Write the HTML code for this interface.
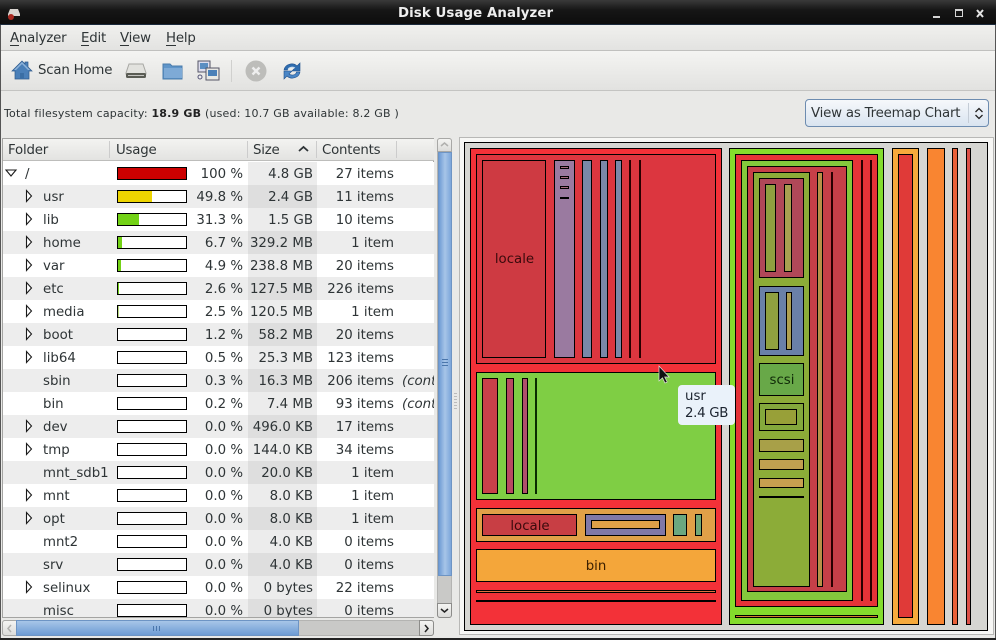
<!DOCTYPE html>
<html><head><meta charset="utf-8"><style>
html,body{margin:0;padding:0;background:#e9e9e7}
#w{position:relative;width:996px;height:640px;overflow:hidden;font:13.33px "DejaVu Sans",sans-serif;color:#2e3436;background:#e9e9e7}
#w div,#w span,#w svg{position:absolute}
.t{white-space:nowrap;line-height:16px}
.k{letter-spacing:-.2px}
.r{left:3px;width:431px;height:23px;overflow:hidden}
.r span{top:5px;white-space:nowrap;line-height:16px}
.n{left:40px}
.p{right:191px}
.s{left:245px;width:69px;top:0!important;height:23px;text-align:right;line-height:25px!important;box-sizing:border-box;padding-right:4px}
.c{right:40px}
.x{left:399px;font-style:italic}
.b{left:114px;top:5px!important;width:68px;height:11px;border:1px solid #000;background:#fff;overflow:hidden}
.b i{display:block;height:100%}
.o{background:#fff}.e{background:#ededed}
.o .s{background:#ececec}.e .s{background:#dedede}
.h{top:141px;height:21px;line-height:20px}
</style></head><body><div id="w">

<div style="left:0;top:0;width:996px;height:25px;background:linear-gradient(#3a3a3a,#161616 40%,#0c0c0c)"></div>
<div style="left:0;top:24px;width:996px;height:1px;background:#1b2a3c"></div>
<div class="t" style="left:398px;top:6px;color:#eee;font-weight:bold;letter-spacing:.09px">Disk Usage Analyzer</div>
<svg style="left:7px;top:8px" width="16" height="14" viewBox="0 0 16 14"><path d="M3 1h8l2 5v2H1V6z" fill="#d8d4d0"/><circle cx="4" cy="9" r="3" fill="#a82820"/></svg>
<svg style="left:930px;top:8px" width="60" height="12" viewBox="0 0 60 12"><rect x="3" y="8" width="7" height="2" fill="#d4d4d4"/><rect x="25.500" y="1.500" width="7" height="7" fill="none" stroke="#d4d4d4"/><rect x="25" y="1" width="8" height="2" fill="#d4d4d4"/><path d="M47 2l6 7M53 2l-6 7" stroke="#e4e4e4" stroke-width="2"/></svg>

<div style="left:0;top:25px;width:996px;height:25px;background:linear-gradient(#f0f0ee,#e3e3e1)"></div>
<div style="left:0;top:50px;width:996px;height:1px;background:#c0c0be"></div>
<div class="t k" style="left:10px;top:31px">Analyzer</div>
<div style="left:10px;top:45px;width:9px;height:1px;background:#2e3436"></div>
<div class="t k" style="left:81px;top:31px">Edit</div><div style="left:81px;top:45px;width:8px;height:1px;background:#2e3436"></div>
<div class="t k" style="left:120px;top:31px">View</div><div style="left:120px;top:45px;width:9px;height:1px;background:#2e3436"></div>
<div class="t k" style="left:166px;top:31px">Help</div><div style="left:166px;top:45px;width:10px;height:1px;background:#2e3436"></div>

<div style="left:0;top:51px;width:996px;height:39px;background:linear-gradient(#f4f4f2,#e2e2e0)"></div>
<div style="left:0;top:90px;width:996px;height:1px;background:#c4c4c2"></div>
<svg style="left:11px;top:59px" width="22" height="22" viewBox="0 0 22 22"><path d="M11 2L1 12h3v8h14v-8h3l-4-4V3h-3v2z" fill="#4a7fb8" stroke="#2e5a8c" stroke-width=".7"/><path d="M11 3L3 11h2l6-6 6 6h2z" fill="#8fb4da"/><rect x="9" y="14" width="4" height="6" fill="#3a6ea5"/></svg>
<div class="t k" style="left:38px;top:63px">Scan Home</div>
<svg style="left:125px;top:61px" width="22" height="19" viewBox="0 0 22 19"><path d="M4 3h14l3 9v1H1v-1z" fill="#e2e2de" stroke="#a8a8a4"/><rect x="1" y="12" width="20" height="5" rx="1.500" fill="#5a5c54"/><rect x="3" y="14" width="16" height="1" fill="#c4c4c0"/></svg>
<svg style="left:162px;top:61px" width="21" height="19" viewBox="0 0 21 19"><path d="M1 3h7l2 2h10v13H1z" fill="#5f95c9" stroke="#4a7cac"/><rect x="2" y="7" width="18" height="10" fill="#7eaad6"/></svg>
<svg style="left:197px;top:60px" width="23" height="22" viewBox="0 0 23 22"><rect x="1" y="1" width="12" height="11" fill="#dde" stroke="#556"/><rect x="3" y="3" width="8" height="6" fill="#5b8ec2"/><rect x="9" y="8" width="13" height="12" fill="#e8e8e4" stroke="#556"/><rect x="11" y="10" width="9" height="6" fill="#4a80b8"/><circle cx="3" cy="17" r="2" fill="#eee" stroke="#557"/></svg>
<div style="left:231px;top:60px;width:1px;height:22px;background:#d0d0ce"></div>
<svg style="left:245px;top:60px" width="22" height="22" viewBox="0 0 22 22"><circle cx="11" cy="11" r="10.500" fill="#bdbdba"/><path d="M7.500 7.500l7 7M14.500 7.500l-7 7" stroke="#eee" stroke-width="2.400"/></svg>
<svg style="left:282px;top:61px" width="20" height="20" viewBox="0 0 20 20"><path d="M2 9C3 3 11 1 15 5l3-3v8h-8l3-3C10 5 6 6 5.500 9z" fill="#2f6db0" stroke="#1d4f8c" stroke-width=".6"/><path d="M18 11c-1 6-9 8-13 4l-3 3v-8h8l-3 3c3 2 7 1 7.500-2z" fill="#4a86c6" stroke="#1d4f8c" stroke-width=".6"/><path d="M6 8.500C7 6 11 5.500 13 7" fill="none" stroke="#c4dbf0"/></svg>

<div class="t" style="left:4px;top:105px;font-size:11px;letter-spacing:.2px;line-height:17px">Total filesystem capacity: <b style="color:#222">18.9 GB</b> (used: 10.7 GB available: 8.2 GB )</div>

<div style="left:805px;top:99px;width:184px;height:28px;box-sizing:border-box;border:1px solid #6d8cb0;border-radius:4px;background:linear-gradient(#f6f8fb,#d9e4f0)"></div>
<div class="t k" style="left:811px;top:106px">View as Treemap Chart</div>
<div style="left:968px;top:103px;width:1px;height:20px;background:#c4ccd6"></div>
<svg style="left:973px;top:106px" width="12" height="15" viewBox="0 0 12 15"><path d="M2.500 6L6 2.500 9.500 6M2.500 9L6 12.500 9.500 9" fill="none" stroke="#222" stroke-width="1.300"/></svg>

<div style="left:2px;top:138px;width:432px;height:480px;box-sizing:border-box;border:1px solid #a4a4a2;background:#fff"></div>
<div style="left:3px;top:139px;width:431px;height:22px;background:linear-gradient(#f3f3f1,#e3e3e1);border-bottom:1px solid #bdbdbb;box-sizing:border-box"></div>
<div style="left:109px;top:141px;width:1px;height:17px;background:#ccc"></div>
<div style="left:247px;top:141px;width:1px;height:17px;background:#ccc"></div>
<div style="left:316px;top:141px;width:1px;height:17px;background:#ccc"></div>
<div style="left:396px;top:141px;width:1px;height:17px;background:#ccc"></div>
<div class="t h k" style="left:8px">Folder</div>
<div class="t h k" style="left:116px">Usage</div>
<div class="t h k" style="left:253px">Size</div>
<svg style="left:298px;top:145px" width="11" height="8" viewBox="0 0 11 8"><path d="M1 6l4.500-4L10 6" fill="none" stroke="#2e3436" stroke-width="1.800"/></svg>
<div class="t h k" style="left:322px">Contents</div>

<div class="r o" style="top:162px"><span class="s">4.8 GB</span><span class="n" style="left:22px">/</span><span class="b"><i style="width:100%;background:#c00"></i></span><span class="p">100 %</span><span class="c">27 items</span></div>
<div class="r e" style="top:185px"><span class="s">2.4 GB</span><span class="n">usr</span><span class="b"><i style="width:34px;background:#edd400"></i></span><span class="p">49.8 %</span><span class="c">11 items</span></div>
<div class="r o" style="top:208px"><span class="s">1.5 GB</span><span class="n">lib</span><span class="b"><i style="width:21px;background:#73d216"></i></span><span class="p">31.3 %</span><span class="c">10 items</span></div>
<div class="r e" style="top:231px"><span class="s">329.2 MB</span><span class="n">home</span><span class="b"><i style="width:4px;background:#73d216"></i></span><span class="p">6.7 %</span><span class="c">1 item</span></div>
<div class="r o" style="top:254px"><span class="s">238.8 MB</span><span class="n">var</span><span class="b"><i style="width:3px;background:#73d216"></i></span><span class="p">4.9 %</span><span class="c">20 items</span></div>
<div class="r e" style="top:277px"><span class="s">127.5 MB</span><span class="n">etc</span><span class="b"><i style="width:1px;background:#73d216"></i></span><span class="p">2.6 %</span><span class="c">226 items</span></div>
<div class="r o" style="top:300px"><span class="s">120.5 MB</span><span class="n">media</span><span class="b"><i style="width:1px;background:#b8d880"></i></span><span class="p">2.5 %</span><span class="c">1 item</span></div>
<div class="r e" style="top:323px"><span class="s">58.2 MB</span><span class="n">boot</span><span class="b"></span><span class="p">1.2 %</span><span class="c">20 items</span></div>
<div class="r o" style="top:346px"><span class="s">25.3 MB</span><span class="n">lib64</span><span class="b"></span><span class="p">0.5 %</span><span class="c">123 items</span></div>
<div class="r e" style="top:369px"><span class="s">16.3 MB</span><span class="n">sbin</span><span class="b"></span><span class="p">0.3 %</span><span class="c">206 items</span><span class="x">(contents</span></div>
<div class="r o" style="top:392px"><span class="s">7.4 MB</span><span class="n">bin</span><span class="b"></span><span class="p">0.2 %</span><span class="c">93 items</span><span class="x">(contents</span></div>
<div class="r e" style="top:415px"><span class="s">496.0 KB</span><span class="n">dev</span><span class="b"></span><span class="p">0.0 %</span><span class="c">17 items</span></div>
<div class="r o" style="top:438px"><span class="s">144.0 KB</span><span class="n">tmp</span><span class="b"></span><span class="p">0.0 %</span><span class="c">34 items</span></div>
<div class="r e" style="top:461px"><span class="s">20.0 KB</span><span class="n">mnt_sdb1</span><span class="b"></span><span class="p">0.0 %</span><span class="c">1 item</span></div>
<div class="r o" style="top:484px"><span class="s">8.0 KB</span><span class="n">mnt</span><span class="b"></span><span class="p">0.0 %</span><span class="c">1 item</span></div>
<div class="r e" style="top:507px"><span class="s">8.0 KB</span><span class="n">opt</span><span class="b"></span><span class="p">0.0 %</span><span class="c">1 item</span></div>
<div class="r o" style="top:530px"><span class="s">4.0 KB</span><span class="n">mnt2</span><span class="b"></span><span class="p">0.0 %</span><span class="c">0 items</span></div>
<div class="r e" style="top:553px"><span class="s">4.0 KB</span><span class="n">srv</span><span class="b"></span><span class="p">0.0 %</span><span class="c">0 items</span></div>
<div class="r o" style="top:576px"><span class="s">0 bytes</span><span class="n">selinux</span><span class="b"></span><span class="p">0.0 %</span><span class="c">22 items</span></div>
<div class="r e" style="top:599px;height:18px"><span class="s">0 bytes</span><span class="n">misc</span><span class="b"></span><span class="p">0.0 %</span><span class="c">0 items</span></div>

<svg style="left:3px;top:162px" width="32" height="440" viewBox="0 0 32 440" fill="#fff" stroke="#1a1a1a" stroke-width="1.100">
<path d="M3 8h10L8 14z"/>
<path d="M23.500 28.500v11l5-5.500z"/><path d="M23.500 51.500v11l5-5.500z"/><path d="M23.500 74.500v11l5-5.500z"/><path d="M23.500 97.500v11l5-5.500z"/><path d="M23.500 120.500v11l5-5.500z"/><path d="M23.500 143.500v11l5-5.500z"/><path d="M23.500 166.500v11l5-5.500z"/><path d="M23.500 189.500v11l5-5.500z"/><path d="M23.500 258.500v11l5-5.500z"/><path d="M23.500 281.500v11l5-5.500z"/><path d="M23.500 327.500v11l5-5.500z"/><path d="M23.500 350.500v11l5-5.500z"/><path d="M23.500 419.500v11l5-5.500z"/></svg>

<div style="left:437px;top:138px;width:15px;height:480px;background:#c9c9c7;box-sizing:border-box;border:1px solid #b4b4b2;border-radius:3px"></div>
<div style="left:437px;top:138px;width:15px;height:14px;background:linear-gradient(#f4f4f2,#dcdcda);border:1px solid #a8a8a6;box-sizing:border-box;border-radius:3px 3px 0 0"></div>
<svg style="left:440px;top:141px" width="9" height="7" viewBox="0 0 9 7"><path d="M1 5l3.500-3L8 5" fill="none" stroke="#b0b0ae" stroke-width="1.500"/></svg>
<div style="left:438px;top:152px;width:14px;height:424px;background:linear-gradient(90deg,#6e9bd4,#a7c5e8 50%,#7ca6da);border:1px solid #6d94c4;box-sizing:border-box"></div>
<div style="left:442px;top:359px;width:6px;height:1px;background:#4a76ac"></div><div style="left:442px;top:362px;width:6px;height:1px;background:#4a76ac"></div><div style="left:442px;top:365px;width:6px;height:1px;background:#4a76ac"></div>
<div style="left:437px;top:603px;width:15px;height:15px;background:linear-gradient(#f4f4f2,#dcdcda);border:1px solid #8c8c8a;box-sizing:border-box;border-radius:0 0 3px 3px"></div>
<svg style="left:440px;top:607px" width="9" height="7" viewBox="0 0 9 7"><path d="M1 2l3.500 3L8 2" fill="none" stroke="#222" stroke-width="1.500"/></svg>

<div style="left:2px;top:620px;width:432px;height:16px;background:#c9c9c7;box-sizing:border-box;border:1px solid #b4b4b2;border-radius:3px"></div>
<div style="left:2px;top:620px;width:15px;height:16px;background:linear-gradient(#f4f4f2,#dcdcda);border:1px solid #a8a8a6;box-sizing:border-box;border-radius:3px 0 0 3px"></div>
<svg style="left:6px;top:624px" width="7" height="9" viewBox="0 0 7 9"><path d="M5 1L2 4.500 5 8" fill="none" stroke="#b0b0ae" stroke-width="1.500"/></svg>
<div style="left:16px;top:620px;width:283px;height:16px;background:linear-gradient(#a7c5e8,#6e9bd4);border:1px solid #6d94c4;box-sizing:border-box"></div>
<div style="left:153px;top:626px;width:1px;height:5px;background:#4a76ac"></div><div style="left:156px;top:626px;width:1px;height:5px;background:#4a76ac"></div><div style="left:159px;top:626px;width:1px;height:5px;background:#4a76ac"></div>
<div style="left:419px;top:620px;width:15px;height:16px;background:linear-gradient(#f4f4f2,#dcdcda);border:1px solid #8c8c8a;box-sizing:border-box;border-radius:0 3px 3px 0"></div>
<svg style="left:423px;top:624px" width="7" height="9" viewBox="0 0 7 9"><path d="M2 1l3 3.500L2 8" fill="none" stroke="#222" stroke-width="1.500"/></svg>

<div style="left:454px;top:393px;width:3px;height:16px;background:repeating-linear-gradient(#bbb 0 1px,transparent 1px 3px)"></div>

<div style="left:459px;top:137px;width:535px;height:498px;background:#f7f7f5;border:1px solid #b8b8b6;box-sizing:border-box"></div>
<svg style="left:0;top:0" width="996" height="640" viewBox="0 0 996 640" stroke="#000" stroke-width="1">
<rect x="464.500" y="142.500" width="523" height="488" fill="#d6d6d2"/>
<rect x="470.500" y="148.500" width="251" height="476" fill="#f33138"/>
<rect x="476.500" y="154.500" width="239" height="209" fill="#dc363f"/>
<rect x="482.500" y="160.500" width="63" height="197" fill="#ce3a42"/>
<rect x="554.500" y="160.500" width="20" height="197" fill="#9a7aa0"/>
<rect x="560.500" y="166.500" width="8" height="2" fill="#a86a80"/><rect x="560.500" y="176.500" width="8" height="2" fill="#a86a80"/><rect x="560.500" y="186.500" width="8" height="2" fill="#a86a80"/><rect x="560" y="197" width="9" height="2" fill="#000" stroke="none"/>
<rect x="582.500" y="160.500" width="9" height="197" fill="#7a88a8"/>
<rect x="600.500" y="160.500" width="7" height="197" fill="#7a88a8"/>
<rect x="615.500" y="160.500" width="6" height="197" fill="#7a88a8"/>
<rect x="629" y="160" width="2" height="198" fill="#280000" stroke="none"/>
<rect x="639" y="160" width="2" height="198" fill="#280000" stroke="none"/>
<rect x="476.500" y="372.500" width="239" height="127" fill="#7fce44"/>
<rect x="482.500" y="378.500" width="15" height="115" fill="#c8404a"/>
<rect x="506.500" y="378.500" width="7" height="115" fill="#b84a62"/>
<rect x="522.500" y="378.500" width="5" height="115" fill="#b0506a"/>
<rect x="535" y="378" width="2" height="116" fill="#0a2a00" stroke="none"/>
<rect x="476.500" y="508.500" width="239" height="33" fill="#e0a048"/>
<rect x="482.500" y="514.500" width="94" height="21" fill="#c83e44"/>
<rect x="585.500" y="514.500" width="80" height="21" fill="#8078a8"/>
<rect x="591.500" y="520.500" width="68" height="8" fill="#e0a048"/>
<rect x="673.500" y="514.500" width="13" height="21" fill="#6aa880"/>
<rect x="695.500" y="514.500" width="6" height="21" fill="#70a878"/>
<rect x="476.500" y="549.500" width="239" height="32" fill="#f4a63a"/>
<rect x="476.500" y="590.500" width="239" height="2" fill="#e07040"/>
<rect x="476" y="600" width="240" height="2" fill="#000" stroke="none"/>

<rect x="729.500" y="148.500" width="154" height="476" fill="#84dc2c"/>
<rect x="735.500" y="154.500" width="142" height="452" fill="#e53338"/>
<rect x="735.500" y="615.500" width="142" height="2" fill="#d08030"/>
<rect x="741.500" y="160.500" width="111" height="440" fill="#84c83c"/>
<rect x="861" y="160" width="2" height="441" fill="#280000" stroke="none"/>
<rect x="870" y="160" width="2" height="441" fill="#280000" stroke="none"/>
<rect x="747.500" y="166.500" width="99" height="425" fill="#c63f48"/>
<rect x="753.500" y="172.500" width="56" height="414" fill="#8cac38"/>
<rect x="817.500" y="172.500" width="5" height="414" fill="#b89048"/>
<rect x="831" y="172" width="2" height="415" fill="#280000" stroke="none"/>
<rect x="759.500" y="178.500" width="44" height="99" fill="#b04858"/>
<rect x="765.500" y="184.500" width="10" height="87" fill="#8fa040"/>
<rect x="784.500" y="184.500" width="7" height="87" fill="#a8a050"/>
<rect x="759.500" y="286.500" width="44" height="69" fill="#6a80a8"/>
<rect x="765.500" y="292.500" width="13" height="57" fill="#90a040"/>
<rect x="786.500" y="292.500" width="5" height="57" fill="#b0a050"/>
<rect x="759.500" y="363.500" width="44" height="32" fill="#68a848"/>
<rect x="759.500" y="403.500" width="44" height="27" fill="#84a83c"/>
<rect x="765.500" y="409.500" width="31" height="15" fill="#98a038"/>
<rect x="759.500" y="439.500" width="44" height="12" fill="#a8a048"/>
<rect x="759.500" y="459.500" width="44" height="10" fill="#c0a050"/>
<rect x="759.500" y="478.500" width="44" height="9" fill="#c8a050"/>
<rect x="759" y="496" width="45" height="2" fill="#000" stroke="none"/>

<rect x="892.500" y="148.500" width="26" height="476" fill="#f6aa3c"/>
<rect x="898.500" y="154.500" width="14" height="463" fill="#e03a38"/>
<rect x="927.500" y="148.500" width="17" height="476" fill="#f98531"/>
<rect x="952.500" y="148.500" width="5" height="476" fill="#e86038"/>
<rect x="966.500" y="148.500" width="4" height="476" fill="#dc5048"/>
<g stroke="none" font-family="DejaVu Sans" font-size="13.330" text-anchor="middle">
<text x="514.500" y="263" fill="#3a0a0c">locale</text>
<text x="530" y="530" fill="#3a0a0c">locale</text>
<text x="596" y="570" fill="#3c2000">bin</text>
<text x="782" y="384" fill="#102a08">scsi</text>
</g>
</svg>

<svg style="left:656px;top:364px" width="15" height="21" viewBox="0 0 15 21"><path d="M3 2v15l3.500-3.200 2.500 5.200 2.200-1-2.500-5h4.500z" fill="#111" stroke="#ddd" stroke-width=".7"/></svg>

<div style="left:678px;top:385px;width:57px;height:40px;background:#eaf2fa;border-radius:4px"></div>
<div class="t" style="left:685px;top:389px;color:#1c2430">usr</div>
<div class="t" style="left:685px;top:406px;color:#1c2430;letter-spacing:-.3px">2.4 GB</div>

<div style="left:0;top:25px;width:1px;height:615px;background:#555"></div>
<div style="left:995px;top:25px;width:1px;height:615px;background:#555"></div>
<div style="left:0;top:638px;width:996px;height:2px;background:#222"></div>
</div></body></html>
